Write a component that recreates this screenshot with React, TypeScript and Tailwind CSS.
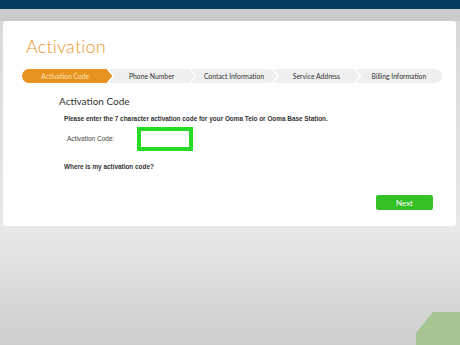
import React from "react";

const steps = ["Activation Code", "Phone Number", "Contact Information", "Service Address", "Billing Information"];

export default function App() {
  return (
    <div className="relative w-[460px] h-[345px] overflow-hidden flex flex-col bg-[#e4e5e5] font-['Lato',sans-serif]">
      <div className="h-[9px] bg-[#073a5f]" />
      <div className="h-[12px] bg-[#c9cbcc]" />
      <div className="bg-gradient-to-b from-[#d8d9da] to-[#e8e8e8] pl-[3px] pr-[4px]">
        <div className="h-[205px] bg-white rounded-[3px] flex flex-col">
          <div className="pl-[23px] pt-[14px] text-[18px] leading-[22px] font-light text-[#e9952a] tracking-[0.2px]">Activation</div>
          <div className="mt-[12px] ml-[19px] mr-[14px] flex h-[14px]">
            {steps.map((s, i) => {
              const first = i === 0;
              const last = i === steps.length - 1;
              const clip = first
                ? "[clip-path:polygon(0_0,calc(100%-6px)_0,100%_50%,calc(100%-6px)_100%,0_100%)] rounded-l-full"
                : last
                ? "[clip-path:polygon(0_0,100%_0,100%_100%,0_100%,6px_50%)] rounded-r-full"
                : "[clip-path:polygon(0_0,calc(100%-6px)_0,100%_50%,calc(100%-6px)_100%,0_100%,6px_50%)]";
              return (
                <div
                  key={s}
                  className={`flex-1 flex items-center justify-center text-[6.8px] ${first ? "bg-[#e8921f] text-[#fde3b8] pr-[4px]" : "bg-[#efefef] text-[#333] -ml-[4px]"} ${clip}`}
                >
                  {s}
                </div>
              );
            })}
          </div>
          <div className="ml-[56px] mt-[12px] text-[10px] leading-[12px] text-[#333]">Activation Code</div>
          <div className="ml-[61px] mt-[8px] text-[6.4px] leading-[8px] font-bold text-[#333] font-['Liberation_Sans',sans-serif]">
            Please enter the 7 character activation code for your Ooma Telo or Ooma Base Station.
          </div>
          <div className="ml-[64px] mt-[4px] flex items-center">
            <div className="w-[70px] text-[6.5px] text-[#444] font-['Liberation_Sans',sans-serif]">Activation Code:</div>
            <div className="w-[56px] h-[24px] border-[4px] border-[#23dc23] bg-white" />
          </div>
          <div className="ml-[61px] mt-[12px] text-[6.4px] leading-[8px] font-bold text-[#333] font-['Liberation_Sans',sans-serif]">
            Where is my activation code?
          </div>
          <div className="flex justify-end mr-[23px] mt-[24px]">
            <div className="w-[57px] h-[15px] rounded-[2px] bg-[#34c126] text-white text-[8px] flex items-center justify-center">Next</div>
          </div>
        </div>
      </div>
      <div className="flex-1 bg-gradient-to-b from-[#e9e9e9] to-[#cecece]" />
      <svg className="absolute left-[416px] top-[312px]" width="44" height="33" viewBox="0 0 44 33">
        <polygon points="17,0 44,0 44,33 0,33 0,21" fill="#a7c493" />
      </svg>
    </div>
  );
}
